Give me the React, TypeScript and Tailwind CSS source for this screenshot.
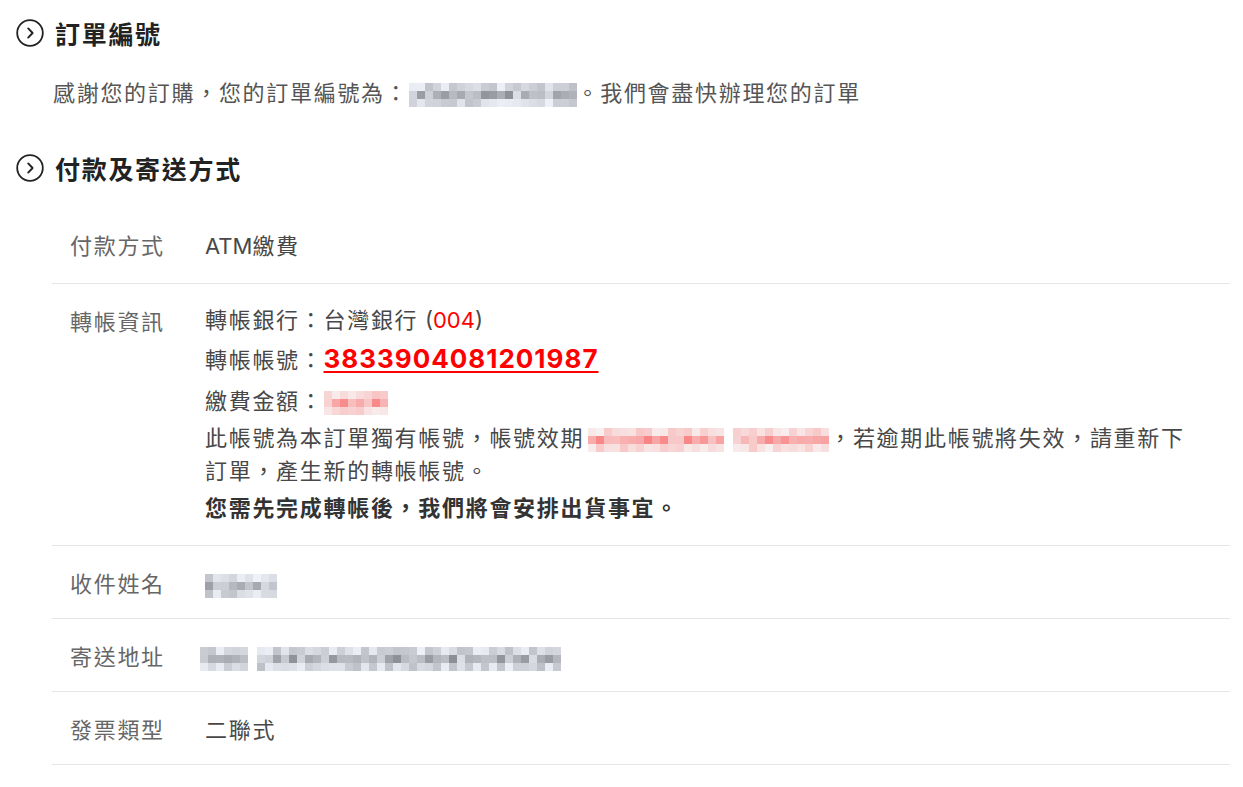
import type { ReactNode } from 'react';

type Tone = 'gray' | 'red';

type MosaicProps = {
  cols: number;
  rows: number;
  cell?: number;
  seed: number;
  tone: Tone;
  gapAt?: number;
};

// pixelated placeholder standing in for the blurred private data
function seeded(seed: number) {
  let s = seed;
  return () => {
    s = (s * 9301 + 49297) % 233280;
    return s / 233280;
  };
}

function Mosaic({ cols, rows, cell = 8, seed, tone, gapAt }: MosaicProps) {
  const rand = seeded(seed);
  const grid = Array.from({ length: rows }, () =>
    Array.from({ length: cols }, () => rand())
  );

  const colorFor = (v: number, r: number) => {
    const edge = r === 0 || r === rows - 1;
    if (tone === 'gray') {
      const base = edge ? 190 : 140;
      const l = Math.round(base + v * (edge ? 50 : 80));
      return `rgb(${l}, ${l + 2}, ${Math.min(255, l + 10)})`;
    }
    const base = edge ? 195 : 130;
    const l = Math.round(base + v * (edge ? 45 : 80));
    return `rgb(248, ${l}, ${l})`;
  };

  return (
    <span className="inline-flex flex-col align-middle">
      {grid.map((row, r) => (
        <span key={r} className="flex">
          {row.map((v, c) => (
            <span
              key={c}
              style={{
                width: cell,
                height: cell,
                marginLeft: gapAt !== undefined && c === gapAt ? 9 : 0,
                backgroundColor: colorFor(v, r),
              }}
            />
          ))}
        </span>
      ))}
    </span>
  );
}

function SectionTitle({ children }: { children: ReactNode }) {
  return (
    <div className="flex h-9 items-center gap-[11px]">
      <svg width="28" height="28" viewBox="0 0 28 28" fill="none" className="shrink-0">
        <circle cx="14" cy="14" r="12.8" stroke="#222222" strokeWidth="1.8" />
        <path d="M12.2 9.4 L16.6 14 L12.2 18.6" stroke="#222222" strokeWidth="1.9" strokeLinecap="round" strokeLinejoin="round" />
      </svg>
      <h2 className="text-[25px] font-bold leading-9 tracking-[1.7px] text-[#222222]">{children}</h2>
    </div>
  );
}

function Latin({ children, className = 'tracking-normal' }: { children: ReactNode; className?: string }) {
  return <span className={`font-['Inter','Noto_Sans_CJK_TC',sans-serif] ${className}`}>{children}</span>;
}

type RowProps = {
  label: string;
  children: ReactNode;
  first?: boolean;
};

function InfoRow({ label, children, first = false }: RowProps) {
  return (
    <div className={`grid grid-cols-[153px_1fr] border-b border-[#e6e6e6] ${first ? 'pb-[19px] pt-[16px]' : 'py-[18px]'}`}>
      <div className="pl-[18px] text-[22px] leading-9 tracking-[1.7px] text-[#666666]">{label}</div>
      <div className="pr-[30px] text-[22px] leading-9 tracking-[1.7px] text-[#484848]">{children}</div>
    </div>
  );
}

export default function App() {
  return (
    <div className="min-h-screen bg-white pl-4 pr-[13px] pt-[15px] font-['Noto_Sans_CJK_TC',sans-serif]">
      <SectionTitle>訂單編號</SectionTitle>
      <p className="mt-[22px] pl-[37px] text-[22px] leading-9 tracking-[1.7px] text-[#555555]">
        感謝您的訂購，您的訂單編號為：
        <Mosaic cols={21} rows={3} cell={8} seed={17} tone="gray" />
        。我們會盡快辦理您的訂單
      </p>

      <div className="mt-[41px]">
        <SectionTitle>付款及寄送方式</SectionTitle>
      </div>

      <div className="ml-9 mt-[24px]">
        <InfoRow label="付款方式" first>
          <Latin className="tracking-normal">ATM</Latin>繳費
        </InfoRow>

        <div className="grid grid-cols-[153px_1fr] border-b border-[#e6e6e6] pb-[19px] pt-[15px]">
          <div className="pl-[18px] pt-[3px] text-[22px] leading-9 tracking-[1.7px] text-[#666666]">轉帳資訊</div>
          <div className="pr-[30px] text-[22px] tracking-[1.7px] text-[#484848]">
            <div className="leading-[38px]">
              轉帳銀行：台灣銀行 <Latin className="tracking-normal">(<span className="text-[#ff0000]">004</span>)</Latin>
            </div>
            <div className="leading-[38px]">
              轉帳帳號：
              <Latin className="text-[26px] font-bold tracking-[1px] text-[#ff0000] underline decoration-2 underline-offset-[3px]">
                3833904081201987
              </Latin>
            </div>
            <div className="leading-[42px]">
              繳費金額：<Mosaic cols={8} rows={3} cell={8} seed={5} tone="red" />
            </div>
            <p className="leading-[33px]">
              此帳號為本訂單獨有帳號，帳號效期
              <span className="ml-1">
                <Mosaic cols={29} rows={3} cell={8} seed={41} tone="red" gapAt={17} />
              </span>
              ，若逾期此帳號將失效，請重新下訂單，產生新的轉帳帳號。
            </p>
            <p className="font-bold leading-[40px] text-[#333333]">您需先完成轉帳後，我們將會安排出貨事宜。</p>
          </div>
        </div>

        <InfoRow label="收件姓名">
          <Mosaic cols={9} rows={3} seed={73} tone="gray" />
        </InfoRow>
        <InfoRow label="寄送地址">
          <span className="-ml-[5px]">
            <Mosaic cols={44} rows={3} seed={101} tone="gray" gapAt={6} />
          </span>
        </InfoRow>
        <InfoRow label="發票類型">二聯式</InfoRow>
      </div>
    </div>
  );
}
